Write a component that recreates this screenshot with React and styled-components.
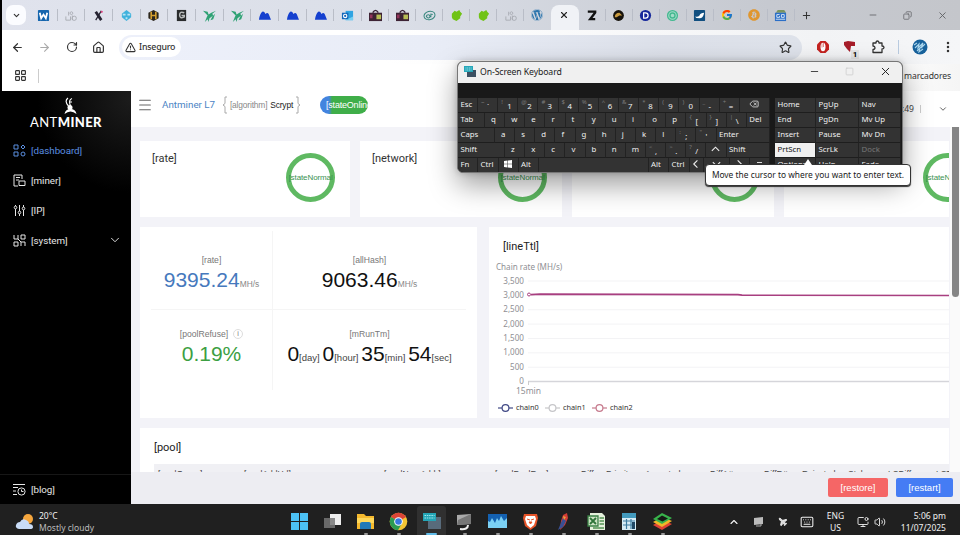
import React from "react";
import styled, { createGlobalStyle } from "styled-components";
import { ArrowLeft, ArrowRight, ChevronDown, ChevronUp, House, LayoutGrid, Menu, Minus, Plane, Plus, RotateCw, Star, TriangleAlert, Volume2, X, Copy, Square, Keyboard, MonitorDot, EllipsisVertical, Delete } from "lucide-react";
import { FaWordpress, FaBitcoin } from "react-icons/fa";
import { FcGoogle } from "react-icons/fc";

const seg = `"Noto Sans", "Open Sans", sans-serif`;

const GlobalStyle = createGlobalStyle`
  * { box-sizing: border-box; }
  body {
    margin: 0;
    overflow: hidden;
    background: #000;
    font-family: Roboto, "Liberation Sans", sans-serif;
  }
  svg { display: block; flex: none; }
`;

/* ---------- tab icons ---------- */

const Ant = () => (
  <g fill="none" stroke="#a9acb3" strokeWidth="1">
    <path d="M2 8v4h5V8M9 7v5M5 3v4M8 3c-2 0-2 3 0 3s2-3 0-3" />
    <circle cx="11" cy="10" r="2.3" />
  </g>
);
const Bird = () => (
  <g fill="#2fa274">
    <path d="M0 2l5 1 1 3 3-2 5-2-4 3 1 2-4 3-1 4-1-3-3 3 2-5 1-2z" />
    <path d="M10 8l3-3-2 6-3 1z" />
  </g>
);
const Hills = () => <path fill="#1540cf" d="M1 11.5Q2 5 4.500 3Q7 2 8 5.500Q10 3 11.500 5.500L14 11.500z" />;
const Bag = () => (
  <g>
    <path d="M4 4q3-5 6 0" fill="none" stroke="#392236" strokeWidth="1.500" />
    <path fill="#3d2334" d="M0 4h14v9H0z" />
    <path fill="#b7bd56" d="M8 6h5v5H8z" />
    <path fill="#92345a" d="M1 6h3v4H1z" />
    <path fill="#3d2334" d="M4 7h3v3H4z" />
  </g>
);
const Gecko = () => <path fill="#70c315" d="M2 5l3-3 2 1 3-2 1 2 2 2-2 3v2l-4 3-4-2-1-2z" />;

const tabIcons = [
  <g><rect x="1" y="1" width="12" height="12" rx="1" fill="#1666ae" /><path d="M3 4l1.500 6L7 6l2.500 4L11 4" fill="none" stroke="#fff" strokeWidth="1.900" /></g>,
  <Ant />,
  <g><path d="M4 3l6 9" stroke="#252331" strokeWidth="3" /><path d="M10 2L4 12" stroke="#252331" strokeWidth="1.300" /><circle cx="10.500" cy="3" r="1.200" fill="#d84582" /></g>,
  <g><path d="M2 5l5-4 5 4v4l-5 4-5-4z" fill="#40b2dc" /><path d="M3 5h3v2H3zm5 0h3v2H8zM6 9h2v2H6z" fill="#b9e4f3" /></g>,
  <g><path d="M7 1l5.500 3v6L7 13l-5.500-3V4z" fill="#2c261c" /><path d="M4.500 3v8M9.500 3v8M5 7h4" stroke="#d6a130" strokeWidth="1.700" /></g>,
  <g><path d="M2 1h10v12H2z" fill="#292b2c" /><path d="M10 4q-5-2-5 2.500t5 2V7H7" stroke="#b9bcbc" strokeWidth="1.600" fill="none" /></g>,
  <Bird />, <Bird />, <Hills />, <Hills />, <Hills />,
  <g><path d="M5 2h8v10H5z" fill="#2fa4e2" /><path d="M5 8l4 2 4-2v4H5z" fill="#75cff3" /><path d="M1 4h7v7H1z" fill="#1469bb" /><circle cx="4.500" cy="7.500" r="1.800" fill="none" stroke="#fff" strokeWidth="1.200" /></g>,
  <Bag />, <Bag />,
  <g fill="none" stroke="#37877e" strokeWidth="1.100"><ellipse cx="7" cy="7" rx="6" ry="4.500" transform="rotate(-15 7 7)" /><path d="M3.500 8.500c0-3 4-3 4-.5S4 10 4 8m4.500 1V5.500l2 .5" /></g>,
  <Gecko />, <Gecko />, <Ant />,
  "wp",
  "active",
  <path d="M3 2.800h8v1L5.500 11H11" fill="none" stroke="#111" strokeWidth="2.400" />,
  <g><circle cx="7" cy="7" r="5.800" fill="#17130c" /><path d="M3 9q0-5 5-5l3 3H8l-3 2z" fill="#c99b41" /></g>,
  <g><circle cx="7" cy="7" r="6" fill="#16289b" /><path d="M5 4.200h2q2.800 0 2.800 2.800T7 9.800H5z" fill="none" stroke="#fff" strokeWidth="1.300" /></g>,
  <g fill="none" stroke="#45b991"><circle cx="7" cy="7" r="5.300" strokeWidth="1.400" fill="#a5dcc9" /><circle cx="7" cy="7" r="2.700" strokeWidth="1.500" /></g>,
  <g><rect x="1" y="1" width="12" height="12" rx="1" fill="#114f80" /><path d="M2 8q3 1 5-1 1-3 5-3-1 6-5 6-4 0-5-2z" fill="#fff" /></g>,
  "google",
  "btc",
  <g><path d="M2 4l2-3h7l2 3z" fill="#7b9560" /><path d="M1 4h12v9H1z" fill="#2b6fc7" /><path d="M6 6H3v3h3V7.500M8 6h3v3H8zM2 11h10" stroke="#d9e6f5" fill="none" /></g>,
];

const TabIcon = ({ icon }) => {
  if (icon === "wp") return <FaWordpress size={12} color="#2c75ad" />;
  if (icon === "google") return <FcGoogle size={12} />;
  if (icon === "btc") return <FaBitcoin size={12} color="#df962f" />;
  if (icon === "active") return <X size={10} color="#222" strokeWidth={2.6} />;
  return <svg width="13" height="13" viewBox="0 0 14 14">{icon}</svg>;
};

/* ---------- data ---------- */

const keyRows = [
  [["Esc", 20], ["`", 20.15, "~"], ["1", 20.15, "!"], ["2", 20.15, "@"], ["3", 20.15, "#"], ["4", 20.15, "$"], ["5", 20.15, "%"], ["6", 20.15, "^"], ["7", 20.15, "&"], ["8", 20.15, "*"], ["9", 20.15, "("], ["0", 20.15, ")"], ["-", 20.15, "_"], ["=", 20.15, "+"], ["bksp", 0]],
  [["Tab", 27], ..."qwertyuiop".split("").map((k) => [k, 20.15]), ["[", 20.15, "{"], ["]", 20.15, "}"], ["\\", 20.15, "|"], ["Del", 0]],
  [["Caps", 37], ..."asdfghjkl".split("").map((k) => [k, 20.15]), [";", 20.15, ":"], ["'", 20.15, "\""], ["Enter", 0]],
  [["Shift", 47], ..."zxcvbnm".split("").map((k) => [k, 20.15]), [",", 20.15, "<"], [".", 20.15, ">"], ["/", 20.15, "?"], ["up", 20.15], ["Shift", 0]],
  [["Fn", 20], ["Ctrl", 20.5], ["win", 20], ["Alt", 20.5], ["", 109.5], ["Alt", 20.5], ["Ctrl", 20.5], ["left", 14], ["down", 26], ["right", 20], ["menu", 0]],
];

const navKeys = [
  ["Home", "PgUp", "Nav"],
  ["End", "PgDn", "Mv Up"],
  ["Insert", "Pause", "Mv Dn"],
  ["PrtScn", "ScrLk", "Dock"],
  ["Options", "Help", "Fade"],
];

const poolCols = [
  ["[poolGroup]", 86], ["[poolAddUrl]", 140], ["[poolNumAddr]", 111], ["[poolPoolReq]", 86],
  ["Diff", 25], ["Priority", 39], ["Accepted", 65], ["DiffA#", 54], ["DiffR#", 38],
  ["Rejected", 46], ["Stale", 40], ["LSDiff", 48], ["LSTime", 40],
];

const arrows = {
  up: "M2 7l4-4 4 4",
  down: "M2 3l4 4 4-4",
  left: "M7 1L3 5l4 4",
  right: "M4 1l4 4-4 4",
};

const KeyFace = ({ k }) => {
  if (arrows[k])
    return <svg width="11" height="10" viewBox="0 0 12 10"><path d={arrows[k]} fill="none" stroke="#eee" strokeWidth="1.200" /></svg>;
  if (k === "bksp") return <Delete size={10} strokeWidth={1.8} />;
  if (k === "win")
    return <svg width="8" height="8" viewBox="0 0 8 8"><path fill="#fff" d="M0 1l3.500-.5v3.200H0zM4 .4L8 0v3.700H4zM0 4.200h3.500v3.200L0 7zM4 4.200h4V8l-4-.5z" /></svg>;
  if (k === "menu") return <svg width="7" height="8" viewBox="0 0 7 8"><path fill="#ddd" d="M1 2h5v1H1zM1 4h5v3H1z" /></svg>;
  return k;
};

const symbols = ["win", "menu", "left", "right", "up", "down", "bksp", ""];

/* ---------- browser ---------- */

const Browser = () => (
  <Chrome>
    <Tabs>
      <TabSearch><ChevronDown size={9} strokeWidth={3} /></TabSearch>
      {tabIcons.map((icon, i) => (
        <Tab key={i} $w={i < 12 ? 27.7 : 27.05} $active={icon === "active"} $line={i !== 18 && i !== 19}>
          <TabIcon icon={icon} />
        </Tab>
      ))}
      <NewTab><Plus size={11} strokeWidth={2.2} /></NewTab>
      <WindowButtons>
        <Minus size={10} /><Copy size={9} style={{ transform: "scaleX(-1)" }} /><X size={11} />
      </WindowButtons>
    </Tabs>
    <Toolbar>
      <ToolIcon><ArrowLeft size={13} strokeWidth={2.2} /></ToolIcon>
      <ToolIcon $dim><ArrowRight size={13} /></ToolIcon>
      <ToolIcon><RotateCw size={12} strokeWidth={2.3} /></ToolIcon>
      <ToolIcon><House size={13} strokeWidth={2.2} /></ToolIcon>
      <Omnibox>
        <Chip><TriangleAlert size={11} strokeWidth={2.2} />Inseguro</Chip>
        <Star size={13} strokeWidth={2.1} />
      </Omnibox>
      <Extensions>
        <svg width="14" height="14" viewBox="0 0 14 14"><path d="M4.500 1h5L13 4.500v5L9.500 13h-5L1 9.500v-5z" fill="#c42320" /><ellipse cx="7" cy="7" rx="2.500" ry="4.200" fill="#fff" /><path d="M6 3.500v4M7.500 3v4" stroke="#c42320" strokeWidth=".5" /></svg>
        <Blocker>
          <svg width="14" height="14" viewBox="0 0 14 14"><path fill="#a61d29" d="M1 2l4-1 7 1v4L8 6l-1 6-3-3-3-4z" /></svg>
          <span>1</span>
        </Blocker>
        <svg width="14" height="14" viewBox="0 0 14 14"><path d="M2 3h3q0-2 1.500-2T8 3h3v3q2 0 2 1.500T11 9v3.500H2V9.500q2 0 2-1.700T2 6z" fill="none" stroke="#333" strokeWidth="1.300" strokeLinejoin="round" /></svg>
        <Split />
        <svg width="16" height="16" viewBox="0 0 16 16"><circle cx="8" cy="8" r="7.500" fill="#17619b" /><path d="M3 9l4-4-1 4 5-5-2 5 4-4M2 6l3-2M5 12l3-3-1 4 4-3" fill="none" stroke="#a9d5ec" strokeWidth="1.100" /></svg>
        <EllipsisVertical size={14} strokeWidth={2.3} />
      </Extensions>
    </Toolbar>
    <Bookmarks>
      <LayoutGrid size={13} strokeWidth={2.1} />
      <Split $grey />
      <span>marcadores</span>
    </Bookmarks>
  </Chrome>
);

/* ---------- sidebar ---------- */

const Side = () => (
  <Sidebar>
    <Logo>
      <svg width="16" height="18" viewBox="0 0 16 18">
        <g fill="none" stroke="#fff" strokeWidth="1.200"><path d="M6.500 9Q2 4 6 1M8.500 9Q6 3 10 1.500M8 5h2" /></g>
        <ellipse cx="8" cy="10.500" rx="2.500" ry="2.500" fill="#fff" />
        <path d="M2.500 17q1-5 6-5t6 5q-3-2.500-6-2.500t-6 2.500z" fill="#fff" />
      </svg>
      <div>ANT<b>MINER</b></div>
    </Logo>
    <NavItem $active>
      <svg width="13" height="13" viewBox="0 0 13 13"><path d="M1 1h4v4H1zM8 3l2-2 2 2-2 2zM1 8h4v4H1z" /><circle cx="10" cy="10" r="2" /></svg>
      [dashboard]
    </NavItem>
    <NavItem>
      <svg width="13" height="13" viewBox="0 0 13 13"><path d="M5 12H1V1h8v4M3 3.500h4M3 6h3M6 7h6v4.500H6z" /></svg>
      [miner]
    </NavItem>
    <NavItem>
      <svg width="13" height="13" viewBox="0 0 13 13"><path d="M2.500 1v1M2.500 5v7M6.500 1v6M6.500 10v2M10.500 1v2M10.500 6v6" /><circle cx="2.500" cy="3.500" r="1.300" /><circle cx="6.500" cy="8.500" r="1.300" /><circle cx="10.500" cy="4.500" r="1.300" /></svg>
      [IP]
    </NavItem>
    <NavItem>
      <svg width="13" height="13" viewBox="0 0 13 13"><path d="M1 1v4h4V1M8 1h4v4H8zM1 12V8h4v4H1M8 12V8h4v4M5 5l3 3" /></svg>
      [system]
      <ChevronDown size={14} strokeWidth={1.6} />
    </NavItem>
    <Blog>
      <svg width="13" height="13" viewBox="0 0 13 13"><path d="M0 1.500h12M0 4.500h5M0 8h3M0 11.500h4M8.500 6.500v2h2" /><circle cx="8.500" cy="8.500" r="3.600" /></svg>
      [blog]
    </Blog>
  </Sidebar>
);

/* ---------- dashboard ---------- */

const Brace = ({ flip }) => (
  <svg width="5" height="18" viewBox="0 0 5 18" style={flip ? { transform: "scaleX(-1)" } : undefined}>
    <path d="M5 1H3v6.500L1 9l2 1.500V17h2" fill="none" stroke="#aaa" />
  </svg>
);

const Chart = () => (
  <ChartSvg width="460" height="160" viewBox="489 259 460 160">
    <text x="496" y="270" fill="#8f8f94" fontSize="8.1">Chain rate (MH/s)</text>
    {["3,500", "3,000", "2,500", "2,000", "1,500", "1,000", "500", "0"].map((t, i) => (
      <g key={t}>
        <text x="524" y={283.5 + i * 14.37} textAnchor="end" fill="#8f8f94" fontSize="8.1">{t}</text>
        <path d={`M528 ${281 + i * 14.37}h421`} stroke={i === 7 ? "#d5d5da" : "#f3f3f5"} strokeWidth={i === 7 ? 1.5 : 1} />
      </g>
    ))}
    <path d="M528.500 381v4" stroke="#ccc" />
    <path d="M531 294.700L540 294.200L640 294.400L738 294.700L742 295.200L949 295.500" fill="none" stroke="#a83f80" strokeWidth="1.700" />
    <circle cx="529" cy="294.500" r="1.500" fill="#fff" stroke="#a83f80" />
    <text x="528.500" y="393.500" textAnchor="middle" fill="#8f8f94" fontSize="8.500">15min</text>
    {[["chain0", "#424a86", 498], ["chain1", "#c6c6c9", 545], ["chain2", "#c67a8d", 592]].map(([t, c, x]) => (
      <g key={t} stroke={c}>
        <path d={`M${x} 408h15`} strokeWidth="1.200" />
        <circle cx={x + 7.5} cy="408" r="3.400" fill="#fff" strokeWidth="1.200" />
        <text x={x + 18} y="410.300" fill="#333" stroke="none" fontSize="7.300">{t}</text>
      </g>
    ))}
  </ChartSvg>
);

const Dashboard = () => (
  <Main>
    <Header>
      <Menu size={16} strokeWidth={1.6} />
      <Model>Antminer L7</Model>
      <Algo><Brace /><i>[algorithm]</i> Scrypt<Brace flip /></Algo>
      <Online>[stateOnline]</Online>
      <Clock>:49<em /><ChevronDown size={10} /></Clock>
    </Header>
    <Scroll>
      <Page>
        <States>
          {["[rate]", "[network]", "[fans]", "[temp]"].map((t, i) => (
            <StateCard key={t} $w={[210, 202, 202, 203][i]}>
              <h4>{t}</h4>
              <Ring><span>[stateNormal]</span></Ring>
            </StateCard>
          ))}
        </States>
        <Middle>
          <Stats>
            <Stat><label>[rate]</label><Value $c="#4679bd">9395.24<small>MH/s</small></Value></Stat>
            <Stat><label>[allHash]</label><Value>9063.46<small>MH/s</small></Value></Stat>
            <Stat><label>[poolRefuse] <Info>i</Info></label><Value $c="#3c9f43">0.19%</Value></Stat>
            <Stat>
              <label>[mRunTm]</label>
              <Value $time>0<small>[day]</small> 0<small>[hour]</small> 35<small>[min]</small> 54<small>[sec]</small></Value>
            </Stat>
          </Stats>
          <ChartCard><h4>[lineTtl]</h4><Chart /></ChartCard>
        </Middle>
        <Pool>
          <h4>[pool]</h4>
          <PoolHead>{poolCols.map(([t, w]) => <PoolCol key={t} $w={w}>{t}</PoolCol>)}</PoolHead>
        </Pool>
      </Page>
      <Track><Thumb /></Track>
    </Scroll>
    <Actions>
      <Action $w={60} $c="#f56666">[restore]</Action>
      <Action $w={57} $c="#457cf4">[restart]</Action>
    </Actions>
  </Main>
);

/* ---------- on-screen keyboard ---------- */

const Osk = () => (
  <OskWindow>
    <OskTitle>
      <svg width="12" height="11" viewBox="0 0 12 11"><path d="M3 4h9v7H3z" fill="#3c5062" /><path d="M0 0h9v6H0z" fill="#26a7b9" /><path d="M1.500 2h6M1.500 4h6" stroke="#a6e5ea" strokeDasharray="1 .7" /></svg>
      <span>On-Screen Keyboard</span>
      <Minus size={11} strokeWidth={1.8} /><Square size={9} color="#ccc" /><X size={13} strokeWidth={1.8} />
    </OskTitle>
    <OskBody>
      <KeyBlock>
        {keyRows.map((row, r) => (
          <KeyRow key={r}>
            {row.map(([k, w, top], i) => (
              <Key key={i} $w={w} $char={k.length === 1} $mid={symbols.includes(k)} $low={!!top}>
                {top && <sup>{top}</sup>}
                <KeyFace k={k} />
              </Key>
            ))}
          </KeyRow>
        ))}
      </KeyBlock>
      <NavBlock>
        {navKeys.map((row, r) => (
          <KeyRow key={r}>
            {row.map((k, i) => <NavKey key={k} $w={[41, 43, 42][i]} $on={k === "PrtScn"} $off={k === "Dock"}>{k}</NavKey>)}
          </KeyRow>
        ))}
      </NavBlock>
    </OskBody>
  </OskWindow>
);

/* ---------- taskbar ---------- */

const apps = [
  <g fill="#4cc2f5"><path d="M1 1h8v8H1zM10 1h8v8h-8zM1 10h8v8H1zM10 10h8v8h-8z" /></g>,
  <g><path d="M7 2h11v11H7z" fill="#eee" /><path d="M1 6h11v10H1z" fill="#777" opacity=".85" /></g>,
  <g><path d="M1 2h7l2 2h8v13H1z" fill="#f5b92e" /><path d="M1 6h17v5H1z" fill="#fed759" /><path d="M4 12q0-2 2-2h7q2 0 2 2v5H4z" fill="#2179b8" /></g>,
  <g><circle cx="9.500" cy="9.500" r="8.800" fill="#f3c434" /><path d="M9.500 9.500L2 5a8.800 8.800 0 0115 0z" fill="#db4437" /><path d="M2 5a8.800 8.800 0 007 13.300l4-7z" fill="#2c9b53" /><circle cx="9.500" cy="9.500" r="4.300" fill="#fff" /><circle cx="9.500" cy="9.500" r="3.300" fill="#3979df" /></g>,
  <g><path d="M6 5h13v12H6z" fill="#586b7b" /><path d="M1 1h13v8H1z" fill="#24a5b6" /><path d="M2.500 3.500h10M2.500 6h10" stroke="#a2e9ee" strokeDasharray="1.500 .8" /></g>,
  <g><path d="M2 3l14-1v10l-14 1z" fill="#aaa" /><path d="M3 8l13-6v10L2 13z" fill="#777" /><path d="M5 17q8 1 8-4" stroke="#eee" strokeWidth="2" fill="none" /></g>,
  <g><path d="M0 2h19v14H0z" fill="#1461b1" /><path d="M0 16V9l2 1 2-4 3 5 2-5 2 3 2-5 3 5 3-3v10z" fill="#7bd0f3" /></g>,
  <g><path d="M3 2h13l1 4-2 8-5.500 4L4 14 2 6z" fill="#e65429" /><path d="M5 4h9l1 3-2 6-3.500 3L6 13 4 7z" fill="#fff" /><path d="M6 7l3 1M13 7l-3 1M8 10h3l-1.500 2z" stroke="#e65429" fill="#e65429" /></g>,
  <g><path d="M9 3l4-2 1 5-3 7-5 5 1-9z" fill="#d43c35" /><path d="M9 6l3 3-3 6-5 3z" fill="#394f93" /><path d="M9 4l3 1-2 3z" fill="#e7a443" /></g>,
  <g><path d="M3 1h12l3 3v14H3z" fill="#e5f1dc" /><path d="M1 4h10v10H1z" fill="#cfe5c6" stroke="#3b8146" strokeWidth="1.300" /><path d="M3 6l6 6M9 6l-6 6" stroke="#2f7439" strokeWidth="1.800" /><path d="M12.500 6H17M12.500 9H17M12.500 12H17M6 16h11" stroke="#549254" strokeWidth="1.300" /></g>,
  <g><path d="M2 1h14v17H2z" fill="#d7edf6" /><path d="M2 1h14v5H2z" fill="#429abd" /><path d="M3 9h12M3 13h12M6.500 7v10M11 7v10" stroke="#3e7da1" strokeWidth="1.200" /><path d="M12 10h3v7h-3z" fill="#204864" /></g>,
  <g><path d="M0 13l9-5 10 4-10 6z" fill="#df4235" /><path d="M0 10l9-5 10 4-10 6z" fill="#f1b729" /><path d="M0 7l9-6 10 5-10 6z" fill="#38b44b" /><path d="M4 7l5-3.500L15 6.500 9.500 9.500z" fill="#151c16" /></g>,
];

const Taskbar = () => (
  <Bar>
    <Weather>
      <svg width="20" height="17" viewBox="0 0 20 17"><circle cx="13" cy="6" r="5" fill="#f5a63d" /><path d="M4 16q-4-1-3-4 1-3 4-3 2-4 6-2 3 1 3 4 4 0 4 3 0 2-3 2z" fill="#c9dcf7" /></svg>
      <div>20°C<br /><span>Mostly cloudy</span></div>
    </Weather>
    <Apps>
      {apps.map((a, i) => (
        <AppButton key={i} $on={i === 4}>
          <svg width="19" height="19" viewBox="0 0 19 19">{a}</svg>
          <Running $on={i === 4} $hide={i < 2} />
        </AppButton>
      ))}
    </Apps>
    <Tray>
      <TrayIcon><ChevronUp size={12} strokeWidth={2.3} /></TrayIcon>
      <TrayIcon><svg width="11" height="11" viewBox="0 0 11 11"><path d="M1 2l9-1v7l-9 1z" fill="#bcbcbc" /><path d="M3 10h5V8" stroke="#aaa" fill="none" /></svg></TrayIcon>
      <TrayIcon><Plane size={10} fill="#ddd" style={{ transform: "rotate(-90deg)" }} /></TrayIcon>
      <TrayIcon><Keyboard size={14} strokeWidth={1.8} /></TrayIcon>
      <Lang>ENG<br />US</Lang>
      <MonitorDot size={12} strokeWidth={1.8} />
      <Volume2 size={12} strokeWidth={1.8} />
      <Time>5:06 pm<br />11/07/2025</Time>
    </Tray>
  </Bar>
);

const App = () => (
  <>
    <GlobalStyle />
    <Desktop>
      <Browser />
      <Content>
        <Side />
        <Dashboard />
      </Content>
      <Taskbar />
      <Osk />
      <Tip>Move the cursor to where you want to enter text.</Tip>
    </Desktop>
  </>
);

const Desktop = styled.div`
  position: relative;
  display: flex;
  flex-direction: column;
  width: 960px;
  height: 535px;
  overflow: hidden;
  background: #000;
`;

const Chrome = styled.div`
  height: 91px;
  margin-left: 2px;
  background: #fff;
  color: #333;
`;

const Tabs = styled.div`
  display: flex;
  align-items: center;
  height: 30px;
  background: linear-gradient(90deg, #e0e3ed 0%, #dbdfe8 40%, #c6c9d0 80%, #c4c6cb 100%);
`;

const TabSearch = styled.div`
  display: flex;
  align-items: center;
  justify-content: center;
  width: 20px;
  height: 20px;
  margin: 0 3.9px 0 4px;
  border-radius: 7px;
  background: #fbfcff;
`;

const Tab = styled.div`
  display: flex;
  align-items: center;
  justify-content: center;
  width: ${(p) => p.$w}px;
  height: ${(p) => (p.$active ? "25px" : "12px")};
  align-self: ${(p) => (p.$active ? "flex-end" : "center")};
  padding-bottom: ${(p) => (p.$active ? "5px" : "0")};
  border-right: 1px solid ${(p) => (p.$line ? "#b9bdc7" : "transparent")};
  ${(p) => p.$active && "background: #f0f2f6; border-radius: 8px 8px 0 0;"}
`;

const NewTab = styled.div`
  margin-left: 6px;
  width: 67px;
`;

const WindowButtons = styled.div`
  display: flex;
  align-items: center;
  gap: 25px;
  color: #606266;
`;

const Toolbar = styled.div`
  display: flex;
  align-items: center;
  height: 34px;
  padding-left: 2px;
  background: linear-gradient(90deg, #fff 40%, #f2f3f5 85%, #f5f6f8);
`;

const ToolIcon = styled.div`
  display: flex;
  justify-content: center;
  width: 27px;
  color: ${(p) => (p.$dim ? "#aaa" : "#333")};
`;

const Omnibox = styled.div`
  display: flex;
  align-items: center;
  justify-content: space-between;
  width: 683px;
  height: 25px;
  margin-left: 7px;
  padding: 0 10px 0 3px;
  border-radius: 13px;
  background: linear-gradient(90deg, #edf0fa 0%, #e9edf7 45%, #dce0e9 80%, #dee2ea 100%);
`;

const Chip = styled.div`
  display: flex;
  align-items: center;
  gap: 3px;
  width: 59px;
  height: 20px;
  padding-left: 3px;
  border-radius: 10px;
  background: #fff;
  font: 500 8.8px ${seg};
  letter-spacing: -0.2px;
`;

const Extensions = styled.div`
  display: flex;
  align-items: center;
  gap: 13.4px;
  margin-left: 14px;
  & > :nth-child(5) {
    margin-left: -1px;
  }
`;

const Blocker = styled.div`
  position: relative;
  & span {
    position: absolute;
    right: -2px;
    bottom: -5px;
    padding: 0 2px;
    background: #e5e5e5;
    color: #000;
    font: bold 8px/9px Roboto, sans-serif;
  }
`;

const Split = styled.div`
  width: 1px;
  height: 14px;
  background: ${(p) => (p.$grey ? "#ccc" : "#b9cbe0")};
`;

const Bookmarks = styled.div`
  display: flex;
  align-items: center;
  gap: 11px;
  height: 27px;
  padding: 0 9px 4px 12px;
  background: linear-gradient(90deg, #fff 90%, #f5f5f5);
  & span {
    margin-left: auto;
    font: 8.6px ${seg};
    letter-spacing: -0.1px;
  }
`;

const Content = styled.div`
  display: flex;
  height: 413px;
`;

const Sidebar = styled.div`
  display: flex;
  flex-direction: column;
  width: 131px;
  background: radial-gradient(circle at 100% 2%, #1c1c1c, #000 22%);
  color: #e7e7e7;
`;

const Logo = styled.div`
  display: flex;
  flex-direction: column;
  align-items: center;
  height: 44px;
  padding: 6px 0 0 1px;
  color: #fff;
  font: 13px/14px Lato, sans-serif;
  letter-spacing: 0.4px;
  & svg {
    margin-left: 8px;
  }
  & b {
    font-weight: 900;
  }
`;

const NavItem = styled.div`
  display: flex;
  align-items: center;
  gap: 5px;
  height: 30px;
  padding: 0 9px 0 13px;
  color: ${(p) => (p.$active ? "#5b8fe0" : "#e7e7e7")};
  font-size: 9.8px;
  letter-spacing: -0.05px;
  & svg {
    fill: none;
    stroke: currentColor;
  }
  & svg:nth-child(2) {
    margin-left: auto;
  }
`;

const Blog = styled(NavItem)`
  margin-top: auto;
  border-top: 1px solid #171717;
`;

const Main = styled.div`
  display: flex;
  flex-direction: column;
  width: 829px;
  background: #fff;
`;

const Header = styled.div`
  display: flex;
  align-items: center;
  height: 36px;
  padding: 0 12px 9px 6px;
  color: #666;
`;

const Model = styled.div`
  width: 54px;
  margin-left: 9px;
  color: #4c84c4;
  font-size: 9.8px;
  white-space: nowrap;
`;

const Algo = styled.div`
  display: flex;
  align-items: center;
  justify-content: space-between;
  width: 79px;
  margin-left: 6px;
  color: #222;
  font: 8.4px "Liberation Sans", sans-serif;
  letter-spacing: -0.15px;
  & i {
    color: #888;
    font-style: normal;
  }
`;

const Online = styled.div`
  width: 48px;
  height: 18px;
  margin-left: 19px;
  padding-left: 6px;
  overflow: hidden;
  border-radius: 9px;
  background: linear-gradient(90deg, #4384df 9px, #3fae49 12px);
  color: #fff;
  font: 9px/18px "Liberation Sans", sans-serif;
  letter-spacing: -0.2px;
  white-space: nowrap;
`;

const Clock = styled.div`
  display: flex;
  align-items: center;
  margin-left: auto;
  padding-top: 8px;
  font: 8.6px ${seg};
  color: #444;
  & em {
    width: 1px;
    height: 8px;
    margin: 0 17px 0 6px;
    background: #ccc;
  }
`;

const Scroll = styled.div`
  display: flex;
  height: 345px;
  overflow: hidden;
`;

const Page = styled.div`
  width: 819px;
  height: 345px;
  padding: 14px 1px 0 9px;
  overflow: hidden;
  background: #f3f3f8;
  & h4 {
    margin: 0;
    color: #333;
    font-size: 11px;
    font-weight: 400;
  }
`;

const Track = styled.div`
  width: 10px;
  padding-left: 2px;
  background: #fafafa;
`;

const Thumb = styled.div`
  width: 7px;
  height: 170px;
  background: #858585;
  border-radius: 0 0 4px 4px;
`;

const States = styled.div`
  display: flex;
  gap: 10px;
  margin-bottom: 10px;
  overflow: hidden;
`;

const StateCard = styled.div`
  display: flex;
  flex: none;
  justify-content: space-between;
  width: ${(p) => p.$w}px;
  height: 76px;
  padding: 11px 15px 0 12px;
  background: #fff;
`;

const Ring = styled.div`
  display: flex;
  align-items: center;
  justify-content: center;
  width: 49px;
  height: 49px;
  margin-top: 1px;
  border: 5px solid #5fb962;
  border-radius: 50%;
  & span {
    flex: none;
    width: 44px;
    overflow: hidden;
    color: #3a9251;
    font: 8px "Liberation Sans", sans-serif;
    letter-spacing: -0.1px;
  }
`;

const Middle = styled.div`
  display: flex;
  gap: 12px;
  margin-bottom: 10px;
`;

const Stats = styled.div`
  display: grid;
  grid-template-columns: 122px 193px;
  grid-template-rows: 79px 80px;
  width: 337px;
  height: 191px;
  padding: 4px 11px 0 11px;
  background: #fff;
`;

const Stat = styled.div`
  display: flex;
  flex-direction: column;
  align-items: center;
  padding-top: 23px;
  &:nth-child(odd) {
    border-right: 1px solid #f5f5f5;
  }
  &:nth-child(-n + 2) {
    border-bottom: 1px solid #f5f5f5;
  }
  &:nth-child(n + 3) {
    padding-top: 18px;
  }
  & label {
    display: flex;
    align-items: center;
    gap: 5px;
    height: 12px;
    color: #777;
    font: 8.6px "Liberation Sans", sans-serif;
  }
`;

const Info = styled.span`
  width: 10px;
  height: 10px;
  border: 1px solid #ddd;
  border-radius: 50%;
  font-size: 7px;
  line-height: 8px;
  text-align: center;
`;

const Value = styled.div`
  color: ${(p) => p.$c || "#111"};
  font: 21px/28px "Liberation Sans", sans-serif;
  white-space: nowrap;
  word-spacing: ${(p) => (p.$time ? "-3px" : "0")};
  & small {
    color: ${(p) => (p.$time ? "#444" : "#888")};
    font-size: ${(p) => (p.$time ? 9.5 : 8.4)}px;
  }
`;

const ChartCard = styled.div`
  width: 460px;
  height: 191px;
  padding: 13px 0 0 0;
  background: #fff;
  & h4 {
    height: 19px;
    padding-left: 14px;
    color: #222;
  }
`;

const ChartSvg = styled.svg`
  font-family: ${seg};
`;

const Pool = styled.div`
  overflow: hidden;
  background: #fff;
  & h4 {
    height: 36px;
    padding: 13px 0 0 14px;
    color: #222;
  }
`;

const PoolHead = styled.div`
  display: flex;
  height: 8px;
  margin-left: 14px;
  padding: 5px 0 0 4px;
  overflow: hidden;
  background: #f0f0f4;
`;

const PoolCol = styled.div`
  flex: none;
  width: ${(p) => p.$w}px;
  color: #444;
  font: 8.5px/10px "Liberation Sans", sans-serif;
`;

const Actions = styled.div`
  display: flex;
  align-items: center;
  justify-content: flex-end;
  gap: 8px;
  height: 32px;
  padding: 0 7px 2px 0;
  background: #ededf2;
`;

const Action = styled.div`
  width: ${(p) => p.$w}px;
  height: 19px;
  border-radius: 2px;
  background: ${(p) => p.$c};
  color: #fff;
  font: 9.5px/19px "Liberation Sans", sans-serif;
  text-align: center;
`;

const OskWindow = styled.div`
  position: absolute;
  left: 457px;
  top: 61px;
  width: 446px;
  height: 112px;
  overflow: hidden;
  border: 1px solid #777;
  border-radius: 6px;
  background: #191919;
  box-shadow: 0 12px 28px rgba(0, 0, 0, 0.38), 0 0 6px rgba(0, 0, 0, 0.2);
`;

const OskTitle = styled.div`
  display: flex;
  align-items: center;
  gap: 4px;
  height: 21px;
  padding: 0 10px 2px 6px;
  background: #f0f0f0;
  color: #222;
  font: 8.7px ${seg};
  & span {
    margin-right: auto;
    letter-spacing: -0.1px;
  }
  & svg:nth-of-type(3) {
    margin: 0 21px 0 21px;
  }
`;

const OskBody = styled.div`
  display: flex;
  justify-content: space-between;
  padding-top: 15px;
`;

const KeyBlock = styled.div`
  width: 312px;
`;

const NavBlock = styled.div`
  width: 127px;
`;

const KeyRow = styled.div`
  display: flex;
  height: 15px;
`;

const Key = styled.div`
  position: relative;
  display: flex;
  align-items: ${(p) => (p.$low ? "flex-end" : "center")};
  justify-content: ${(p) => (p.$mid ? "center" : "flex-start")};
  flex: ${(p) => (p.$w ? "none" : "1")};
  width: ${(p) => p.$w}px;
  padding-left: ${(p) => (p.$mid ? 0 : p.$low ? 9 : p.$char ? 6 : 2.5)}px;
  padding-bottom: ${(p) => (p.$low ? 0 : 2)}px;
  border-right: 1px solid #222;
  border-bottom: 1px solid #1e1e1e;
  background: #333;
  color: #f0f0f0;
  font: 7.8px/11px ${seg};
  & sup {
    position: absolute;
    left: 3px;
    top: 0;
    color: #7c7c7c;
    font-size: 6px;
    line-height: 9px;
  }
`;

const NavKey = styled(Key)`
  background: ${(p) => (p.$on ? "#f0f0f0" : "#333")};
  color: ${(p) => (p.$on ? "#111" : p.$off ? "#777" : "#f0f0f0")};
`;

const Tip = styled.div`
  position: absolute;
  left: 705px;
  top: 164px;
  width: 206px;
  height: 22px;
  border: 1px solid #333;
  border-radius: 4px;
  background: #fff;
  box-shadow: 0 1px 1px #333;
  color: #222;
  font: 8.4px/20px ${seg};
  text-align: center;
  white-space: nowrap;
  &::before {
    content: "";
    position: absolute;
    left: 98px;
    top: -6px;
    border: 4px solid transparent;
    border-top-width: 0;
    border-bottom: 6px solid #fff;
  }
`;

const Bar = styled.div`
  display: flex;
  align-items: center;
  height: 31px;
  background: #202020;
  color: #f2f2f2;
  font: 8.5px/12px ${seg};
`;

const Weather = styled.div`
  display: flex;
  align-items: center;
  gap: 4px;
  width: 283px;
  padding: 4px 0 0 15px;
  & span {
    color: #bbb;
  }
`;

const Apps = styled.div`
  display: flex;
`;

const AppButton = styled.div`
  display: flex;
  flex-direction: column;
  align-items: center;
  justify-content: space-between;
  width: 29px;
  height: 29px;
  margin: 2px 2px 0;
  padding-top: 6px;
  border-radius: 3px 3px 0 0;
  background: ${(p) => (p.$on ? "#303030" : "none")};
`;

const Running = styled.div`
  width: ${(p) => (p.$on ? 11 : 4)}px;
  height: 2px;
  border-radius: 1px;
  background: ${(p) => (p.$hide ? "none" : p.$on ? "#60bce9" : "#999")};
`;

const Tray = styled.div`
  display: flex;
  align-items: center;
  margin-left: auto;
  padding: 4px 14px 0 0;
  gap: 5px;
`;

const TrayIcon = styled.div`
  display: flex;
  justify-content: center;
  width: 19.5px;
`;

const Lang = styled.div`
  width: 27px;
  margin-right: 3px;
  text-align: center;
`;

const Time = styled.div`
  width: 55px;
  text-align: right;
`;

export default App;
